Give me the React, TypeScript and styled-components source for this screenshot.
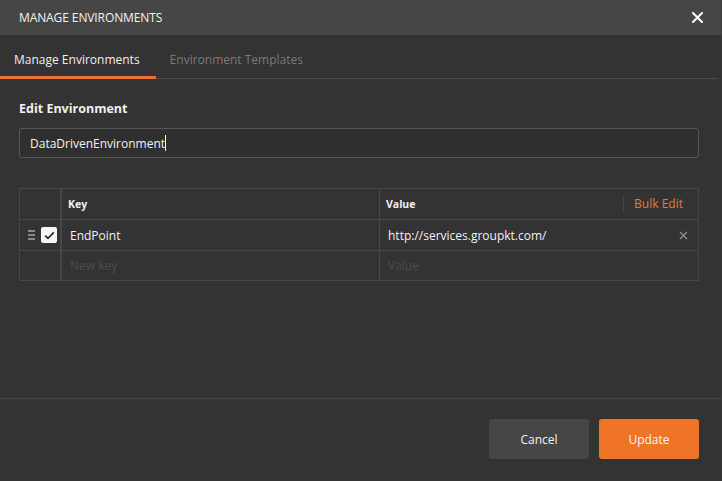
import React from "react";
import styled, { createGlobalStyle } from "styled-components";

const Global = createGlobalStyle`
  html, body { margin: 0; padding: 0; background: #333333; }
  body { font-family: "Open Sans", "Noto Sans", sans-serif; -webkit-font-smoothing: antialiased; }
  * { box-sizing: border-box; }
`;

const Modal = styled.div`
  width: 722px;
  height: 481px;
  background: #333333;
  display: flex;
  flex-direction: column;
  color: #ffffff;
  border-right: 1px solid #3b3b3b;
`;

const Header = styled.div`
  height: 35px;
  flex: none;
  background: #464646;
  display: flex;
  align-items: center;
  justify-content: space-between;
  padding: 0 18px 0 19px;
`;

const Title = styled.div`
  font-size: 12px;
  letter-spacing: -0.1px;
  color: #f2f2f2;
`;

const CloseButton = styled.button`
  background: none;
  border: none;
  padding: 0;
  color: #ffffff;
  display: flex;
  align-items: center;
  cursor: pointer;
`;

const TabBar = styled.div`
  height: 44px;
  flex: none;
  display: flex;
  align-items: stretch;
  border-bottom: 1px solid #4a4a4a;
  margin-right: 3px;
`;

const Tab = styled.div<{ $active?: boolean }>`
  display: flex;
  align-items: center;
  padding: 8px 16px 0 14px;
  font-size: 12px;
  color: ${(p) => (p.$active ? "#f0f0f0" : "#7a7a7a")};
  border-bottom: 3px solid ${(p) => (p.$active ? "#e8722f" : "transparent")};
  margin-bottom: -1px;
`;

const Body = styled.div`
  flex: 1;
  padding: 21px 22px 0 19px;
  display: flex;
  flex-direction: column;
`;

const SectionTitle = styled.div`
  font-size: 12.5px;
  font-weight: 700;
  color: #f0f0f0;
  margin-bottom: 11px;
`;

const TextInput = styled.div`
  height: 30px;
  border: 1px solid #575757;
  border-radius: 3px;
  background: #2f2f2f;
  display: flex;
  align-items: center;
  padding: 0 10px;
  font-size: 12px;
  color: #f2f2f2;
`;

const Caret = styled.span`
  display: inline-block;
  width: 1px;
  height: 16px;
  background: #ffffff;
  vertical-align: middle;
`;

const Table = styled.div`
  margin-top: 30px;
  border: 1px solid #464646;
  display: flex;
  flex-direction: column;
`;

const Row = styled.div<{ $h: number; $last?: boolean }>`
  display: grid;
  grid-template-columns: 42px 318px 1fr;
  height: ${(p) => p.$h}px;
  border-bottom: ${(p) => (p.$last ? "none" : "1px solid #474747")};
`;

const Cell = styled.div<{ $lead?: boolean }>`
  display: flex;
  align-items: center;
  padding-left: ${(p) => (p.$lead ? "0" : "6px")};
  border-right: ${(p) => (p.$lead ? "2px solid #474747" : "1px solid #474747")};
  &:last-child { border-right: none; }
`;

const HeadLabel = styled.span`
  font-size: 10.5px;
  font-weight: 700;
  color: #f0f0f0;
  flex: 1;
`;

const CellText = styled.span<{ $placeholder?: boolean }>`
  font-size: 12px;
  color: ${(p) => (p.$placeholder ? "#4b4b4b" : "#f2f2f2")};
  padding-left: 2px;
  flex: 1;
`;

const BulkEdit = styled.span`
  font-size: 12px;
  color: #e07a3c;
  padding: 0 15px 0 10px;
  border-left: 1px solid #444444;
  line-height: 16px;
`;

const RowControls = styled.div`
  display: flex;
  align-items: center;
  gap: 6px;
  padding-left: 8px;
`;

const Handle = styled.div`
  display: flex;
  flex-direction: column;
  gap: 2px;
  width: 7px;
  span {
    display: block;
    height: 2px;
    background: #8a8a8a;
  }
`;

const CheckBox = styled.div`
  width: 16px;
  height: 16px;
  background: #f5f5f5;
  border-radius: 2px;
  display: flex;
  align-items: center;
  justify-content: center;
`;

const DeleteIcon = styled.span`
  color: #8c8c8c;
  display: flex;
  margin-right: 10px;
`;

const Footer = styled.div`
  flex: none;
  height: 83px;
  border-top: 1px solid #474747;
  display: flex;
  align-items: flex-start;
  justify-content: flex-end;
  gap: 10px;
  padding: 20px 22px 0 0;
`;

const Button = styled.button<{ $primary?: boolean }>`
  width: 100px;
  height: 40px;
  border: none;
  border-radius: 3px;
  background: ${(p) => (p.$primary ? "#ef7428" : "#464646")};
  color: #f4f4f4;
  font-family: "Open Sans", "Noto Sans", sans-serif;
  font-size: 12px;
  cursor: pointer;
`;

export default function App() {
  return (
    <>
      <Global />
      <Modal>
        <Header>
          <Title>MANAGE ENVIRONMENTS</Title>
          <CloseButton aria-label="Close">
            <svg width="11" height="11" viewBox="0 0 11 11">
              <path d="M1 1L10 10M10 1L1 10" stroke="#fff" strokeWidth="2" strokeLinecap="square" />
            </svg>
          </CloseButton>
        </Header>
        <TabBar>
          <Tab $active>Manage Environments</Tab>
          <Tab>Environment Templates</Tab>
        </TabBar>
        <Body>
          <SectionTitle>Edit Environment</SectionTitle>
          <TextInput>
            DataDrivenEnvironment<Caret />
          </TextInput>
          <Table>
            <Row $h={31}>
              <Cell $lead />
              <Cell>
                <HeadLabel>Key</HeadLabel>
              </Cell>
              <Cell>
                <HeadLabel>Value</HeadLabel>
                <BulkEdit>Bulk Edit</BulkEdit>
              </Cell>
            </Row>
            <Row $h={31}>
              <Cell $lead>
                <RowControls>
                  <Handle>
                    <span />
                    <span />
                    <span />
                  </Handle>
                  <CheckBox>
                    <svg width="11" height="9" viewBox="0 0 11 9">
                      <path d="M1.2 4.6L4 7.3L9.8 1.4" stroke="#2a2a2a" strokeWidth="1.8" fill="none" />
                    </svg>
                  </CheckBox>
                </RowControls>
              </Cell>
              <Cell>
                <CellText>EndPoint</CellText>
              </Cell>
              <Cell>
                <CellText>http://services.groupkt.com/</CellText>
                <DeleteIcon>
                  <svg width="9" height="9" viewBox="0 0 9 9">
                    <path d="M1 1L8 8M8 1L1 8" stroke="#8c8c8c" strokeWidth="1.4" />
                  </svg>
                </DeleteIcon>
              </Cell>
            </Row>
            <Row $h={29} $last>
              <Cell $lead />
              <Cell>
                <CellText $placeholder>New key</CellText>
              </Cell>
              <Cell>
                <CellText $placeholder>Value</CellText>
              </Cell>
            </Row>
          </Table>
        </Body>
        <Footer>
          <Button>Cancel</Button>
          <Button $primary>Update</Button>
        </Footer>
      </Modal>
    </>
  );
}
